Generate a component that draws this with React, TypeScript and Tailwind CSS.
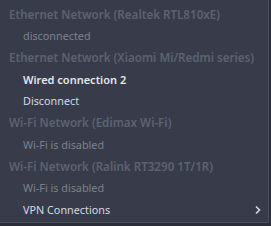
import React from 'react';

type Row = { label: string; kind: 'header' | 'dim' | 'bold' | 'item' | 'sub' };

const rows: Row[] = [
  { label: 'Ethernet Network (Realtek RTL810xE)', kind: 'header' },
  { label: 'disconnected', kind: 'dim' },
  { label: 'Ethernet Network (Xiaomi Mi/Redmi series)', kind: 'header' },
  { label: 'Wired connection 2', kind: 'bold' },
  { label: 'Disconnect', kind: 'item' },
  { label: 'Wi-Fi Network (Edimax Wi-Fi)', kind: 'header' },
  { label: 'Wi-Fi is disabled', kind: 'dim' },
  { label: 'Wi-Fi Network (Ralink RT3290 1T/1R)', kind: 'header' },
  { label: 'Wi-Fi is disabled', kind: 'dim' },
  { label: 'VPN Connections', kind: 'sub' },
];

const Chevron = () => (
  <svg width="8" height="10" viewBox="0 0 8 10" fill="none" stroke="#d3dae3" strokeWidth={1.6}>
    <path d="M2 1.5l3.5 3.5L2 8.5" />
  </svg>
);

export default function App() {
  return (
    <div className="w-[271px] h-[226px] bg-[#2b2e38] overflow-hidden" style={{ fontFamily: '"Noto Sans", "Open Sans", sans-serif' }}>
      <div className="w-[269px] h-[223px] bg-[#383c4a] border-r border-b border-[#4a4f5c] pt-[4px]">
        {rows.map((r, i) => {
          const base = 'h-[21.7px] flex items-center leading-none whitespace-nowrap';
          if (r.kind === 'header')
            return (
              <div key={i} className={`${base} pl-[9px] text-[11.6px] text-[#5d6271] font-semibold`}>
                {r.label}
              </div>
            );
          if (r.kind === 'dim')
            return (
              <div key={i} className={`${base} pl-[23px] text-[10.8px] text-[#7c818d]`}>
                {r.label}
              </div>
            );
          if (r.kind === 'bold')
            return (
              <div key={i} className={`${base} pl-[23px] text-[11px] text-[#e3e6ea] font-semibold`}>
                {r.label}
              </div>
            );
          return (
            <div key={i} className={`${base} pl-[23px] pr-[6px] text-[10.8px] text-[#d3dae3] justify-between`}>
              <span>{r.label}</span>
              {r.kind === 'sub' && <Chevron />}
            </div>
          );
        })}
      </div>
    </div>
  );
}
